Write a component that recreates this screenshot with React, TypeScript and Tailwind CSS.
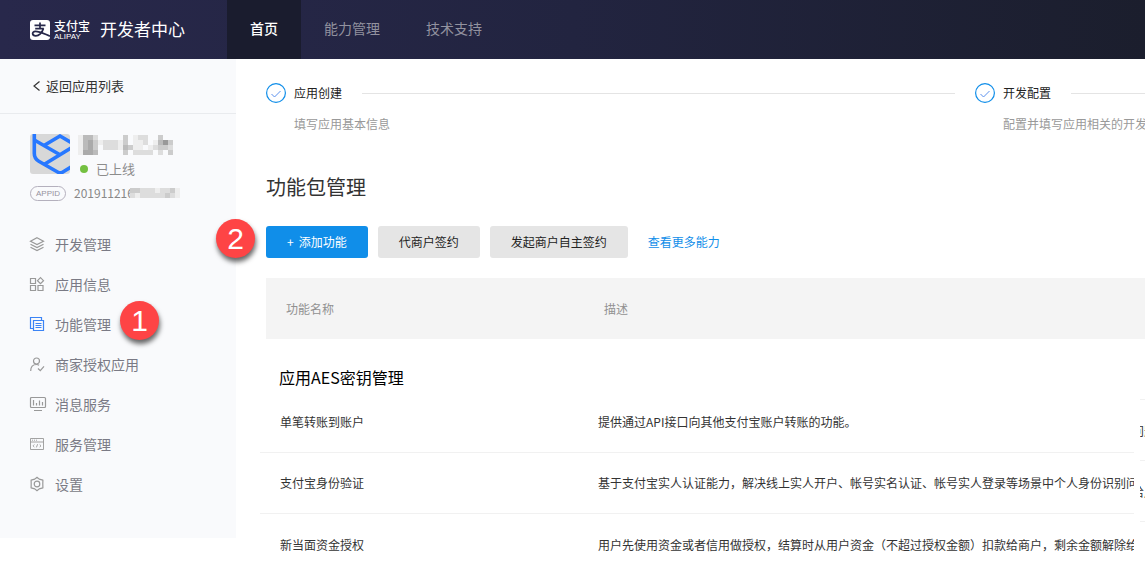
import React from 'react';
import { clsx } from 'clsx';

type IconProps = { className?: string };

const iconProps = {
  viewBox: '0 -1 16 16',
  fill: 'none',
  stroke: 'currentColor',
  strokeWidth: 1.2,
  className: 'block w-4 h-4 shrink-0 overflow-visible',
};

const LayersIcon = () => (
  <svg {...iconProps}>
    <path d="M7 .8 13.500 4.200 7 7.600.5 4.200Z" />
    <path d="M.5 7.200 7 10.600l6.500-3.400M.5 10.200 7 13.600l6.500-3.400" />
  </svg>
);

const AppsIcon = () => (
  <svg {...iconProps}>
    <path d="M.5 1.500h5v5h-5zM.5 8.500h5v5h-5zM8 8.500h5v5H8zM10.500.7l3 3-3 3-3-3z" />
  </svg>
);

const CopyIcon = () => (
  <svg {...iconProps}>
    <path d="M3 11.500H.5v-11h11V3" />
    <path d="M3.500 3.500h10v10h-10zM5.500 6.500h6M5.500 8.500h6M5.500 10.500h6" />
  </svg>
);

const UserIcon = () => (
  <svg {...iconProps}>
    <circle cx="6.500" cy="4" r="3" />
    <path d="M.7 14c0-4 2-6.500 5.800-6.500 1 0 1.900.3 2.600.8M8 11.500l2.300 2.200L14 9.300" />
  </svg>
);

const MonitorIcon = () => (
  <svg {...iconProps}>
    <rect x=".5" y=".5" width="15" height="10" rx="1" />
    <path d="M3.500 3v5.500M6.500 6v2.500M9.500 3.500v5M12.500 5v3.500M4 13.500h8" />
  </svg>
);

const ConsoleIcon = () => (
  <svg {...iconProps} strokeWidth={0.9}>
    <path d="M.5 1.500h13v11H.5zM.5 5h13M2 3.200h1M4 3.200h1M6 3.200h1" />
    <path d="M4.300 7.500 3 8.800l1.300 1.200M9.700 7.500 11 8.800 9.700 10M7.600 7.200l-1.200 3.200" />
  </svg>
);

const GearIcon = () => (
  <svg {...iconProps}>
    <path d="M7 .3 9.200 2.100 12.900 3.200 12.800 7 12.900 10.800 9.200 11.900 7 13.700 4.800 11.900 1.100 10.800 1.200 7 1.100 3.200 4.800 2.100Z" strokeLinejoin="round" />
    <circle cx="7" cy="7" r="2.800" />
  </svg>
);

const navItems = [
  { label: '开发管理', Icon: LayersIcon },
  { label: '应用信息', Icon: AppsIcon },
  { label: '功能管理', Icon: CopyIcon, active: true, badge: '1' },
  { label: '商家授权应用', Icon: UserIcon },
  { label: '消息服务', Icon: MonitorIcon },
  { label: '服务管理', Icon: ConsoleIcon },
  { label: '设置', Icon: GearIcon },
];

const features = [
  { name: '单笔转账到账户', desc: '提供通过API接口向其他支付宝账户转账的功能。' },
  {
    name: '支付宝身份验证',
    desc: '基于支付宝实人认证能力，解决线上实人开户、帐号实名认证、帐号实人登录等场景中个人身份识别问',
  },
  {
    name: '新当面资金授权',
    desc: '用户先使用资金或者信用做授权，结算时从用户资金（不超过授权金额）扣款给商户，剩余金额解除给',
  },
];

// Pixelated blocks that hide private values, one hex digit of grey per cell
const hiddenName = [
  'ebbdfffffcfeddffcff',
  'ebacedddecfeedfeb9c',
  'ebacfdddebceefedccd',
  'eaabfffffcfddddfdfc',
];
const hiddenId = ['ccdddeddce', 'dedddddcde'];

function Mosaic({ rows, className }: IconProps & { rows: string[] }) {
  return (
    <svg
      viewBox={`0 0 ${rows[0].length} ${rows.length}`}
      preserveAspectRatio="none"
      shapeRendering="crispEdges"
      className={className}
    >
      {rows.map((row, y) =>
        row.split('').map((c, x) => (
          <rect key={`${x}-${y}`} x={x} y={y} width="1" height="1" fill={c === 'f' ? '#f9fafc' : `#${c}${c}${c}`} />
        ))
      )}
    </svg>
  );
}

function Badge({ children, className }: { children: React.ReactNode; className?: string }) {
  return (
    <span
      className={clsx(
        'absolute z-10 flex size-[39px] items-center justify-center rounded-full bg-[#fe4445] text-white',
        'font-["Liberation_Sans",sans-serif] text-[30px] leading-none shadow-[1px_4px_5px_rgba(0,0,0,0.6)]',
        className
      )}
    >
      {children}
    </span>
  );
}

function AlipayLogo() {
  return (
    <div className="flex items-center gap-1 text-white">
      <svg viewBox="0 0 20 20" className="size-5">
        <rect width="20" height="20" rx="3" fill="#fff" />
        <g fill="none" stroke="#27284a" strokeLinecap="butt">
          <path d="M4.500 5.300h11M5.200 8.600h8.600M10 2.500v6" strokeWidth="1.700" />
          <path d="M13.400 8.600c-1.200 4.400-4.600 7.200-7.600 7.200-4 0-4.200-4.300-.4-4.500 3.800-.1 9 2.600 14.600 4.800" strokeWidth="1.800" />
        </g>
      </svg>
      <div className="flex flex-col">
        <span className="text-[12px] leading-[14px] font-medium">支付宝</span>
        <span className="font-['Liberation_Sans',sans-serif] text-[8px] leading-2">ALIPAY</span>
      </div>
    </div>
  );
}

function Header() {
  return (
    <header className="flex h-[59px] items-stretch bg-linear-to-r from-[#28284b] via-[#222440] to-[#1b1e2d]">
      <div className="flex w-[227px] shrink-0 items-center gap-2.5 pl-[30px]">
        <AlipayLogo />
        <span className="pb-0.5 text-[17px] text-white">开发者中心</span>
      </div>
      <nav className="flex text-[14px]">
        <a href="#" className="flex items-center bg-[#1a1c2e] px-[23px] pb-0.5 font-medium text-white">首页</a>
        <a href="#" className="flex items-center px-[23px] pb-0.5 text-[#92929f]">能力管理</a>
        <a href="#" className="flex items-center px-[23px] pb-0.5 text-[#92929f]">技术支持</a>
      </nav>
    </header>
  );
}

function Sidebar() {
  return (
    <aside className="w-[236px] shrink-0 self-start bg-[#f9fafc] pb-[34px]">
      <a href="#" className="flex h-[55px] items-center gap-1 border-b border-[#e9ebee] pl-[30px] text-[13px] text-[#333]">
        <svg viewBox="0 0 12 12" className="size-3" fill="none" stroke="currentColor" strokeWidth="1.200">
          <path d="M9.500 1.500 4 6l5.500 4.500" />
        </svg>
        返回应用列表
      </a>

      {/* App summary */}
      <div className="flex gap-2 pt-5 pl-[30px]">
        <svg viewBox="0 0 40 40" className="size-10 rounded-[3px] bg-[#d8d8d8]" fill="none" stroke="#2878ff" strokeWidth="3.600">
          <path d="M4.300-1v20.500c0 4 1.500 6 4.500 7.700L28 38.200c1.500.9 3 .9 4.500 0L42 32.500" />
          <path d="M4.300 6 30 20.800M14 11.500 30 2l11 6.500M14 30.500 42 13.500" />
        </svg>
        <div className="flex flex-col">
          <Mosaic rows={hiddenName} className="mt-px h-5 w-[95px]" />
          <div className="mt-1 flex items-center gap-2 pl-0.5 text-[13px] leading-5 text-[#8c8c8c]">
            <span className="size-2 rounded-full bg-[#74c041]" />
            已上线
          </div>
        </div>
      </div>
      <div className="mt-1.5 flex items-center pl-[30px] text-[12px] leading-4 text-[#888]">
        <span className="mr-2 h-[15px] w-9 rounded-full border border-[#b4b0bd] text-center font-['Liberation_Sans',sans-serif] text-[8px] leading-[13px] text-[#9793a0]">
          APPID
        </span>
        <span className="w-14">201911216</span>
        <Mosaic rows={hiddenId} className="relative h-2.5 w-[50px]" />
      </div>

      <nav className="mt-[23px]">
        {navItems.map(({ label, Icon, active, badge }) => (
          <a key={label} href="#" className="relative flex h-10 items-center gap-[9px] pl-[30px] text-[14px] text-[#7a7a85]">
            <span className={active ? 'text-[#3c84f5]' : 'text-[#999]'}>
              <Icon />
            </span>
            {label}
            {badge && <Badge className="-top-[3px] left-[120px]">{badge}</Badge>}
          </a>
        ))}
      </nav>
    </aside>
  );
}

function Step({ title, desc, className }: { title: string; desc: string; className?: string }) {
  return (
    <li className={clsx('overflow-hidden', className)}>
      <div className="flex h-5 items-center">
        <svg viewBox="0 0 20 20" className="mr-2 size-5 shrink-0" fill="none" stroke="#108ee9">
          <circle cx="10" cy="10" r="9.400" strokeWidth="1.200" />
          <path d="m5.500 11 3 3 6-6" stroke="#5c91ee" />
        </svg>
        <span className="text-[12px] text-[#222]">{title}</span>
        <span className="ml-5 h-px flex-1 bg-[#e4e4e4]" />
      </div>
      <p className="mt-[11px] ml-7 text-[12px] leading-5 whitespace-nowrap text-[#999]">{desc}</p>
    </li>
  );
}

function FeatureTable() {
  return (
    <>
      <table className="mt-5 w-full table-fixed bg-[#f4f4f4] text-left text-[12px] text-[#919191]">
        <thead>
          <tr className="h-[61px]">
            <th className="w-[338px] pl-5 font-normal">功能名称</th>
            <th className="font-normal">描述</th>
          </tr>
        </thead>
      </table>

      <h3 className="mt-[26px] ml-[13px] text-[16px] leading-6 text-black">应用AES密钥管理</h3>

      <div className="mt-[3px] -ml-1.5 flex gap-1.5">
        <table className="block min-w-0 flex-1 overflow-hidden text-[12px] text-[#333]">
          <tbody className="block divide-y divide-[#f1f1f1]">
            {features.map((f) => (
              <tr key={f.name} className="flex h-[61px] items-center">
                <td className="w-[338px] shrink-0 pl-5">{f.name}</td>
                <td className="min-w-0 flex-1 overflow-hidden whitespace-nowrap">{f.desc}</td>
              </tr>
            ))}
          </tbody>
        </table>

        <div className="mt-[7px] w-[5px] shrink-0 overflow-hidden text-[12px] whitespace-nowrap text-[#333]">
          <div className="h-[61px] border-t border-[#f1f1f1] leading-[61px]">
            <span className="-ml-2">问题</span>
          </div>
          <div className="h-[61px] border-t border-[#f1f1f1] leading-[61px]">
            <span className="-ml-2">给用</span>
          </div>
          <div className="border-t border-[#f1f1f1]" />
        </div>
      </div>
    </>
  );
}

export default function App() {
  return (
    <div className="overflow-hidden bg-white font-['Noto_Sans_CJK_SC',sans-serif]">
      <Header />
      <div className="flex">
        <Sidebar />
        <main className="min-w-0 flex-1 pt-6 pl-[30px]">
          <ol className="flex gap-5">
            <Step title="应用创建" desc="填写应用基本信息" className="min-w-0 flex-1" />
            <Step title="开发配置" desc="配置并填写应用相关的开发信息" className="w-[170px] shrink-0" />
          </ol>

          <h2 className="mt-9 text-[20px] leading-[34px] text-[#333]">功能包管理</h2>

          <div className="relative mt-[22px] flex items-center gap-2.5 text-[12px]">
            <Badge className="-top-[7px] -left-[50px]">2</Badge>
            <button className="flex h-8 items-center gap-[5px] rounded-[3px] bg-[#108ee9] px-[21px] text-white">
              <span>+</span>
              <span>添加功能</span>
            </button>
            <button className="h-8 rounded-[3px] bg-[#e5e5e5] px-[21px] text-[#222]">代商户签约</button>
            <button className="h-8 rounded-[3px] bg-[#e5e5e5] px-[21px] text-[#222]">发起商户自主签约</button>
            <a href="#" className="ml-2.5 text-[#108ee9]">查看更多能力</a>
          </div>

          <FeatureTable />
        </main>
      </div>
    </div>
  );
}
